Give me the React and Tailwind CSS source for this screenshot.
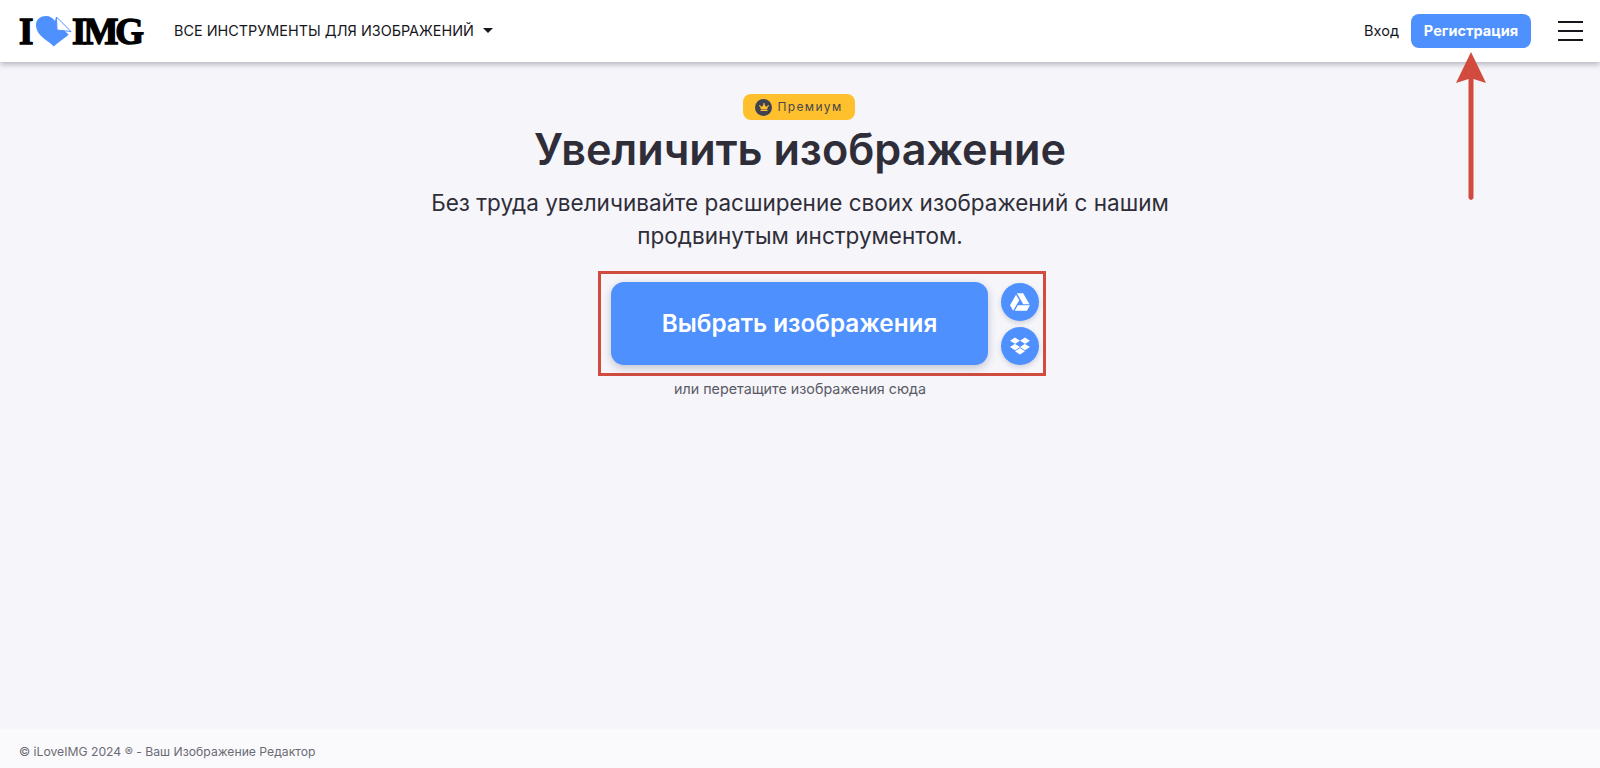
import { FaCrown, FaDropbox, FaGoogleDrive } from 'react-icons/fa';

function Logo() {
  return (
    <div className="flex items-center font-['Liberation_Serif',serif] text-[37px] leading-none font-bold text-black [-webkit-text-stroke:1.4px_#000]">
      <span className="w-[17px]">I</span>
      <svg className="h-[31px] w-[36px] shrink-0" viewBox="0 0 36 31">
        <path d="M18 30.5 C13 25 0 20 0 9 C0 3 5 0 10 0 C14 0 17 2 19 5 L20 1 L35 16 C30 22 22 26 18 30.5 Z" fill="#4d90fe" />
        <path d="M20.5 1 L35 15.5 L34 20 L22 8 Z" fill="#fff" />
        <path d="M20.5 1 L21 14 L35 15.5 Z" fill="#fff" stroke="#4d90fe" strokeWidth="1" />
      </svg>
      <span className="tracking-[-3px]">IMG</span>
    </div>
  );
}

function Header() {
  return (
    <header className="relative z-10 flex h-[62px] items-center justify-between bg-white pr-[17px] pl-[19px] shadow-[0_2px_6px_rgba(40,40,60,0.35)]">
      <div className="flex items-center">
        <Logo />
        <button className="ml-[33px] flex items-center text-[14.4px] text-[#16161c]">
          ВСЕ ИНСТРУМЕНТЫ ДЛЯ ИЗОБРАЖЕНИЙ
          <span className="ml-[9px] h-0 w-0 border-x-[5px] border-t-[5px] border-x-transparent border-t-[#16161c]" />
        </button>
      </div>
      <div className="flex items-center">
        <a className="text-[14.5px] text-[#16161c]">Вход</a>
        <a className="ml-[12px] flex h-[34px] w-[120px] items-center justify-center rounded-[8px] bg-[#4d90fe] text-[14.5px] font-bold text-white">
          Регистрация
        </a>
        <button className="ml-[27px] flex w-[25px] flex-col gap-[7px]">
          <span className="h-[2px] bg-[#16161c]" />
          <span className="h-[2px] bg-[#16161c]" />
          <span className="h-[2px] bg-[#16161c]" />
        </button>
      </div>
    </header>
  );
}

function CloudButton({ children }) {
  return (
    <button className="flex h-[38px] w-[38px] items-center justify-center rounded-full bg-[#4d90fe] text-white shadow-[0_2px_5px_rgba(50,50,90,0.2)]">
      {children}
    </button>
  );
}

export default function App() {
  return (
    <div className="relative flex h-[768px] flex-col overflow-hidden bg-[#f5f5fa] font-['Inter',sans-serif] text-[#2f2e38]">
      <Header />

      <main className="flex flex-1 flex-col items-center pt-[32px]">
        <div className="-ml-[2px] flex h-[26px] w-[112px] items-center justify-center gap-[5px] rounded-[8px] bg-[#ffc02d] text-[12px] tracking-[1.4px] text-[#47484f]">
          <span className="flex h-[17px] w-[17px] items-center justify-center rounded-full bg-[#3f4250]">
            <FaCrown className="h-[10px] w-[10px] text-[#ffc02d]" />
          </span>
          Премиум
        </div>

        <h1 className="mt-[1px] text-[43.2px] leading-[56px] font-semibold">Увеличить изображение</h1>
        <h2 className="mt-[9px] w-[760px] text-center text-[22.5px] leading-[33px] font-normal">
          Без труда увеличивайте расширение своих изображений с нашим продвинутым инструментом.
        </h2>

        <div className="mt-[19px] ml-[44px] flex h-[105px] w-[448px] items-center gap-[13px] border-[3px] border-[#d14c3f] pl-[10px]">
          <button className="flex h-[83px] w-[377px] items-center justify-center rounded-[13px] bg-[#4d90fe] text-[24.3px] font-semibold text-white shadow-[0_3px_8px_rgba(50,50,90,0.25)]">
            Выбрать изображения
          </button>
          <div className="flex flex-col gap-[6px]">
            <CloudButton>
              <FaGoogleDrive className="h-[20px] w-[20px]" />
            </CloudButton>
            <CloudButton>
              <FaDropbox className="h-[20px] w-[20px]" />
            </CloudButton>
          </div>
        </div>

        <p className="mt-[4px] text-[14.3px] leading-[17px] text-[#5b5b66]">или перетащите изображения сюда</p>
      </main>

      <footer className="flex h-[39px] items-center bg-[#fafafc] pt-[7px] pl-[19px] text-[12.2px] text-[#6b6b75]">
        © iLoveIMG 2024 ® - Ваш Изображение Редактор
      </footer>

      {/* annotation arrow over the page */}
      <svg className="absolute top-[52px] left-[1455px] z-20 h-[150px] w-[32px]" viewBox="0 0 32 150">
        <path d="M16 0 L31 31 L18.5 27 L18.5 146 Q16 150 13.5 146 L13.5 27 L1 31 Z" fill="#d14c3f" />
      </svg>
    </div>
  );
}
